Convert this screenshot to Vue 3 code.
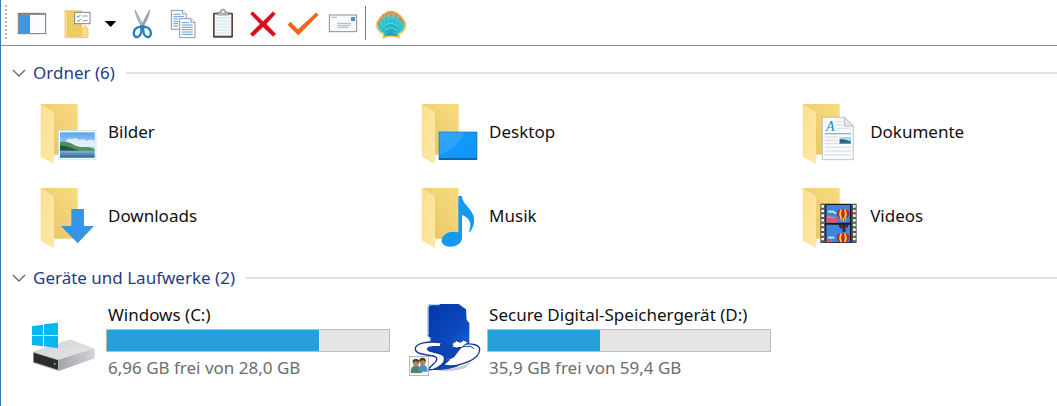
<template>
  <div class="explorer">
    <div class="toolbar" role="toolbar" aria-label="Symbolleiste">
      <span class="grip"></span>
      <button class="tool" type="button" aria-label="Navigationsbereich">
        <svg viewBox="36 0 120 135">
          <rect x="55" y="40" width="82" height="61" fill="#fbfbfd" stroke="#6f7780" stroke-width="3" />
          <rect x="57" y="45" width="33" height="54" fill="#3b97e3" />
          <path d="M54 42h84" stroke="#6f7780" stroke-width="5" />
          <path d="M119 42h3m4 0h3m4 0h3" stroke="#fff" stroke-width="2" />
        </svg>
      </button>
      <button class="tool options" type="button" aria-label="Ordneroptionen">
        <svg viewBox="174 0 120 135">
          <path d="M195 31h52v82h-52z" fill="#efcb63" />
          <path d="M195 31l8 6v71h45v-22l8-10 8 10v27h-69z" fill="#fbdf88" stroke="#e3bd58" stroke-width="2" />
          <rect x="224" y="37" width="46" height="34" fill="#fff" stroke="#7c8792" stroke-width="3" />
          <path d="M231 48l4 4 7-8M231 61l4 4 7-8" fill="none" stroke="#2e8ae0" stroke-width="3" />
          <path d="M247 48h16M247 62h16" stroke="#8c98a5" stroke-width="3" />
        </svg>
      </button>
      <button class="tool drop" type="button" aria-label="Weitere Optionen">
        <svg viewBox="294 0 72 135">
          <path d="M314 63h35l-17 18z" fill="#000" />
        </svg>
      </button>
      <button class="tool" type="button" aria-label="Ausschneiden">
        <svg viewBox="369 0 120 135">
          <path d="M405 30l28 51-6 4c-9-17-20-35-22-55z" fill="#b9bcc1" stroke="#8f9399" stroke-width="2" />
          <path d="M449 30l-28 51 6 4c9-17 20-35 22-55z" fill="#a2a5ab" stroke="#85898f" stroke-width="2" />
          <g fill="none" stroke="#2382bd" stroke-width="7">
            <path d="M427 78c-5 4-14 1-20 8-8 8-7 20-1 24 7 4 17-4 18-15 0-6-1-11 3-17z" />
            <path d="M427 78c5 4 14 1 20 8 8 8 7 20 1 24-7 4-17-4-18-15 0-6 1-11-3-17z" />
          </g>
        </svg>
      </button>
      <button class="tool" type="button" aria-label="Kopieren">
        <svg viewBox="489 0 120 135">
          <g fill="#fff" stroke="#7b828a" stroke-width="2.5">
            <path d="M514 31h34l11 11v46h-45z" />
            <path d="M548 31v11h11" />
          </g>
          <path d="M520 43h22M520 50h32M520 57h14M520 64h14M520 71h14M520 78h14" stroke="#5f9ce6" stroke-width="3" />
          <g fill="#fff" stroke="#7b828a" stroke-width="2.5">
            <path d="M539 56h34l12 11v46h-46z" />
            <path d="M573 56v11h12" />
          </g>
          <path d="M545 68h22M545 75h33M545 82h33M545 89h33M545 96h33M545 103h33" stroke="#5f9ce6" stroke-width="3" />
        </svg>
      </button>
      <button class="tool" type="button" aria-label="Einfügen">
        <svg viewBox="9 0 120 135">
          <rect x="39" y="38" width="60" height="75" rx="3" fill="#5c4437" />
          <rect x="44" y="43" width="50" height="64" fill="#f7fafe" />
          <path d="M46 54h46M46 63h46M46 72h46M46 81h46M46 90h46M46 99h46" stroke="#b9d3ec" stroke-width="2" />
          <path d="M52 45v-8h9c0-13 16-13 16 0h9v8z" fill="#b5b9be" stroke="#777c82" stroke-width="2" />
          <circle cx="69" cy="35" r="3" fill="#fff" />
        </svg>
      </button>
      <button class="tool" type="button" aria-label="Löschen">
        <svg viewBox="129 0 120 135">
          <path d="M158 35l31 30 30-30 7 7-28 30 29 30-8 7-30-29-30 29-8-7 30-30-29-30z" fill="#d90d1c" stroke="#c80a18" stroke-width="2" />
        </svg>
      </button>
      <button class="tool" type="button" aria-label="Eigenschaften">
        <svg viewBox="249 0 120 135">
          <path d="M264 74l8-7 22 22 54-50 6 6-59 60z" fill="#f2651a" stroke="#d9540b" stroke-width="2" />
        </svg>
      </button>
      <button class="tool" type="button" aria-label="Senden">
        <svg viewBox="369 0 120 135">
          <rect x="388" y="45" width="82" height="50" fill="#f8f9fa" stroke="#8b9095" stroke-width="3" />
          <rect x="453" y="51" width="12" height="12" fill="#4a8fd0" />
          <path d="M394 52h17M412 70h41M412 76h41M412 82h33" stroke="#8b9095" stroke-width="2" />
        </svg>
      </button>
      <span class="divider"></span>
      <button class="tool shell" type="button" aria-label="Classic Shell">
        <svg viewBox="513 0 120 135">
          <path d="M549 113v-12c-14-5-22-17-19-31 1-8 5-10 9-16 3-7 9-8 14-13 6-5 11-7 19-7s15 2 20 7c6 4 11 6 14 13 4 6 8 8 9 16 2 14-5 26-19 31v12c-8-3-15-4-24-4s-16 1-23 4z" transform="translate(1 0)" fill="url(#shellFill)" stroke="#f3c85c" stroke-width="5" />
          <path d="M572 105L535 72M572 105L543 54M572 105L556 42M572 105V37M572 105l17-63M572 105l30-51M572 105l38-33" stroke="#1fa0b4" stroke-width="1.5" />
          <path d="M534 73q-2-8 7-10-2-9 7-11 0-9 10-9 5-8 14-5 9-4 15 5 9 0 11 9 8 2 6 11 8 3 7 10" fill="none" stroke="#e97d4c" stroke-width="5" stroke-dasharray="7 3" />
          <path d="M547 82q25-25 50 0M554 91q18-15 37 0" fill="none" stroke="#63ddec" stroke-width="3" />
          <path d="M556 106q16-5 33 0" fill="none" stroke="#2796aa" stroke-width="4" />
        </svg>
      </button>
    </div>

    <main class="content">
      <section class="group">
        <h2 class="group-head">
          <button type="button" :aria-expanded="foldersOpen" @click="foldersOpen = !foldersOpen">
            <svg class="chevron" viewBox="0 0 14 8"><path d="M1 1l6 6 6-6" /></svg>
            Ordner ({{ folders.length }})
          </button>
        </h2>
        <div v-if="foldersOpen" class="tiles">
          <a v-for="f in folders" :key="f.id" class="tile" href="#">
            <svg class="icon" viewBox="0 0 228 252" aria-hidden="true">
              <path d="M26 42h111v152H62z" fill="url(#folderBack)" />
              <path d="M64 194h7v8l-7 13z" fill="#f3f3f3" />
              <path d="M26 42l35 21q5 3 5 9v150L26 200z" fill="url(#folderFront)" />
              <g v-if="f.id === 'bilder'" transform="translate(-96 -120)">
                <rect x="176" y="242" width="112" height="86" fill="#f7fbfe" stroke="#c8dcea" stroke-width="2" />
                <rect x="180" y="247" width="104" height="76" fill="url(#sky)" />
                <path d="M198 272q8-11 18-4 12-9 22 2 15-6 22 3 12-8 24-1v18h-86z" fill="#fff" opacity=".7" />
                <path d="M180 275q18-2 33 5 12 9 31 12 23-4 40 6v6H180z" fill="#4f8f58" />
                <path d="M180 286q27 3 44 12l20 6h-64z" fill="#24573d" />
                <path d="M180 302h104v21H180z" fill="url(#lake)" />
              </g>
              <g v-else-if="f.id === 'desktop'" transform="translate(-39 0)">
                <rect x="117" y="126" width="114" height="82" fill="url(#screen)" stroke="#176fae" stroke-width="2" />
                <path d="M118 127h78q-24 48-78 68z" fill="#fff" opacity=".1" />
                <path d="M117 207h114" stroke="#115384" stroke-width="4" />
              </g>
              <g v-else-if="f.id === 'dokumente'" transform="translate(-40 0)">
                <path d="M125 82h66l27 26v101h-93z" fill="#f8fafb" stroke="#a3aab0" stroke-width="2" />
                <path d="M191 82v26h27z" fill="#e3e8ec" stroke="#a3aab0" stroke-width="2" />
                <path d="M166 95h20M166 105h20M168 115h42M132 141h40M132 151h40M132 161h40M132 172h79M132 183h79M132 195h79" stroke="#c3cbd2" stroke-width="2" />
                <path d="M132 131h79" stroke="#79b9dc" stroke-width="4" />
                <text x="136" y="124" class="doc-letter">A</text>
                <rect x="177" y="141" width="34" height="21" fill="#a5d5f3" />
                <path d="M177 147q17 0 34 8v7h-34z" fill="#285e78" />
                <path d="M177 158h34v4h-34z" fill="#4d9bd0" />
              </g>
              <g v-else-if="f.id === 'downloads'" transform="translate(-36 3)">
                <path d="M154 102h38v51h30l-49 52-50-52h31z" fill="#3595e8" />
              </g>
              <g v-else-if="f.id === 'musik'" transform="translate(-39 3)">
                <path d="M175 64q6-4 11 0c1 17 14 27 25 41 17 23 14 46-1 66l-3-2c10-24 3-39-21-49v68c0 16-16 27-35 27-17 0-27-8-26-20 2-19 29-30 50-23z" fill="#109bee" />
              </g>
              <g v-else transform="translate(-40 3)">
                <rect x="119" y="86" width="109" height="118" fill="#54575a" />
                <path d="M126 90v112M221 90v112" stroke="#f2f2f2" stroke-width="8" stroke-dasharray="8 6" />
                <path d="M134 87h78v117h-78z" fill="#17181b" />
                <path d="M137 90h71v53h-71zM137 149h71v53h-71z" fill="#4083dc" />
                <path d="M137 143v-12l10-5 11 6 8-6 5 4v13z" fill="#e0507c" />
                <path d="M139 128l8-4 7 5 9-4" fill="none" stroke="#f08a6a" stroke-width="4" />
                <path d="M142 112q6-7 9-1 6-5 9 2 5-1 7 4M142 190q6-7 9-1 6-5 9 2" fill="none" stroke="#c4dcf8" stroke-width="5" />
                <path d="M137 202v-5l12-3 10 8z" fill="#e0507c" />
                <g v-for="b in balloons" :key="b" :transform="`translate(0 ${b})`">
                  <path d="M187 101c-13 0-19 7-19 15 0 6 5 10 9 14h20c5-4 9-8 9-14 0-8-7-15-19-15z" fill="#c2262d" />
                  <path d="M180 103q-8 13-1 27h5q-5-15 0-29zM194 103q8 13 1 27h-5q5-15 0-29z" fill="#f3d33c" />
                </g>
                <path d="M178 130h19l-4 11h-11z" fill="#e3c54a" />
                <path d="M183 131l2 10M192 131l-2 10" stroke="#352d36" stroke-width="2" />
                <path d="M174 146h30q-1 10-9 15h-13q-8-5-8-15z" fill="#202539" />
                <path d="M182 150q1 6 4 10M197 150q-1 6-4 10" fill="none" stroke="#c23b43" stroke-width="3" />
                <path d="M186 163h8v7h-8z" fill="#121827" />
              </g>
            </svg>
            <span class="label">{{ f.name }}</span>
          </a>
        </div>
      </section>

      <section class="group">
        <h2 class="group-head">
          <button type="button" :aria-expanded="drivesOpen" @click="drivesOpen = !drivesOpen">
            <svg class="chevron" viewBox="0 0 14 8"><path d="M1 1l6 6 6-6" /></svg>
            Geräte und Laufwerke ({{ drives.length }})
          </button>
        </h2>
        <div v-if="drivesOpen" class="tiles">
          <a v-for="d in drives" :key="d.id" class="tile" href="#">
            <svg v-if="d.id === 'c'" class="icon" viewBox="96 24 228 252" aria-hidden="true">
              <path d="M99 186l111-37 73 27v29l-107 38-77-25z" fill="#bfc1c4" />
              <path d="M99 185l105-34q6-2 12 0l67 25-107 33z" fill="url(#diskTop)" />
              <path d="M176 209l107-33v29l-107 38z" fill="url(#diskSide)" />
              <path d="M99 185l77 24v34l-77-25z" fill="#b2b4b6" />
              <path d="M101 188l73 23v28l-73-23z" fill="#2b2d2f" />
              <circle cx="164" cy="222" r="3" fill="#51d66b" />
              <path d="M96 109l33-5v31H96zM132 103l42-5v37h-42zM96 138h33v31l-33-4zM132 138h42v37l-42-6z" fill="#08b7ef" />
            </svg>
            <svg v-else class="icon" viewBox="27 0 228 252" aria-hidden="true">
              <path d="M100 214q60 4 104-26l-20 22q-32 12-84 8z" fill="#c9ccd2" />
              <path d="M78 140l-1-22-6-4V26q1-8 9-8h84l22 16 2 32 8 9v60l-42 34h-40z" fill="url(#sdFill)" />
              <path d="M72 112V30q0-9 9-10h26M78 118v22" fill="none" stroke="#b8d8ff" stroke-width="4" />
              <!-- rechte Schleife -->
              <path d="M178 139c26-4 50 2 49 16-1 28-52 50-112 51l12-15c4-8 14-10 22-15 6-8 14-22 29-37z" fill="#fff" stroke="#16389a" stroke-width="4" stroke-linejoin="round" />
              <path d="M168 148c18-5 39-4 41 5" fill="none" stroke="#16389a" stroke-width="3" />
              <!-- Mittelteil und Fuß -->
              <path d="M72 150q30-14 96-8l12-2-30 34q-8 10-26 9l-14 9q-8-18-38-24z" fill="#0a45b4" />
              <path d="M124 182l14 4-18 14q30 3 49 2-28 15-84 14l20-16z" fill="#0a45b4" />
              <path d="M112 134c-38-5-80 0-78 20 2 16 34 16 54 20 16 4 12 16-2 26l-16 16 18-2c20-6 34-20 34-32 0-16-26-17-45-23-12-4-6-13 12-13h20z" fill="#fff" stroke="#16389a" stroke-width="4" stroke-linejoin="round" />
              <path d="M143 138l14-10 12 5 10-7 14 7-20 15q-14 4-35-1l10-4z" fill="#fff" stroke="#16389a" stroke-width="3" />
              <rect x="16" y="175" width="58" height="58" fill="#f7f8f7" stroke="#999" stroke-width="2" />
              <path d="M21 225q-3-22 15-22t18 22z" fill="#46886b" />
              <path d="M45 221q-3-21 11-21 15 0 15 21z" fill="#4b91c7" />
              <ellipse cx="36" cy="195" rx="9" ry="11" fill="#b58563" />
              <path d="M26 196q-2-14 11-13 10 0 9 11l-10-5-7 4z" fill="#463e35" />
              <ellipse cx="56" cy="191" rx="9" ry="11" fill="#b9825c" />
              <path d="M46 191q-1-13 11-12 10 1 8 13l-7-6z" fill="#493b31" />
            </svg>
            <span class="drive">
              <label class="label" :for="'usage-' + d.id">{{ d.name }}</label>
              <progress :id="'usage-' + d.id" class="usage" :max="d.total" :value="d.total - d.free"></progress>
              <span class="label free">{{ formatGB(d.free) }} frei von {{ formatGB(d.total) }}</span>
            </span>
          </a>
        </div>
      </section>
    </main>

    <!-- gemeinsame Farbverläufe -->
    <svg class="defs" aria-hidden="true">
      <defs>
        <linearGradient id="folderBack" x1="0" y1="1" x2="1" y2="0">
          <stop offset="0" stop-color="#e6c362" />
          <stop offset="1" stop-color="#f9dc80" />
        </linearGradient>
        <linearGradient id="folderFront" x1="0" y1="0" x2="1" y2="1">
          <stop offset="0" stop-color="#fbdf90" />
          <stop offset="1" stop-color="#ffe8a6" />
        </linearGradient>
        <linearGradient id="sky" x1="0" y1="0" x2="0" y2="1">
          <stop offset="0" stop-color="#5ba5ed" />
          <stop offset="1" stop-color="#e5f5ff" />
        </linearGradient>
        <linearGradient id="lake" x1="0" y1="0" x2="0" y2="1">
          <stop offset="0" stop-color="#86b8d8" />
          <stop offset="1" stop-color="#296596" />
        </linearGradient>
        <linearGradient id="screen" x1="0" y1="0" x2="1" y2="1">
          <stop offset="0" stop-color="#189cfb" />
          <stop offset="1" stop-color="#0b94f7" />
        </linearGradient>
        <linearGradient id="diskTop" x1="0" y1="0" x2="1" y2="1">
          <stop offset="0" stop-color="#d1d2d4" />
          <stop offset="1" stop-color="#e7e7e9" />
        </linearGradient>
        <linearGradient id="diskSide" x1="0" y1="0" x2="1" y2="0">
          <stop offset="0" stop-color="#a4a5a8" />
          <stop offset="1" stop-color="#d2d3d6" />
        </linearGradient>
        <linearGradient id="sdFill" x1="0" y1="0" x2="1" y2="1">
          <stop offset="0" stop-color="#0436a4" />
          <stop offset=".6" stop-color="#0a49be" />
          <stop offset="1" stop-color="#1268dd" />
        </linearGradient>
        <radialGradient id="shellFill" cx=".5" cy=".7" r=".65">
          <stop offset="0" stop-color="#20a9c4" />
          <stop offset=".65" stop-color="#38cbd7" />
          <stop offset="1" stop-color="#e5a369" />
        </radialGradient>
      </defs>
    </svg>
  </div>
</template>

<script setup>
import { ref } from 'vue'

const foldersOpen = ref(true)
const drivesOpen = ref(true)

const folders = [
  { id: 'bilder', name: 'Bilder' },
  { id: 'desktop', name: 'Desktop' },
  { id: 'dokumente', name: 'Dokumente' },
  { id: 'downloads', name: 'Downloads' },
  { id: 'musik', name: 'Musik' },
  { id: 'videos', name: 'Videos' }
]

const drives = [
  { id: 'c', name: 'Windows (C:)', free: 6.96, total: 28 },
  { id: 'd', name: 'Secure Digital-Speichergerät (D:)', free: 35.9, total: 59.4 }
]

// vertikale Lage der Ballons im Filmstreifen
const balloons = [0, 72]

// drei signifikante Stellen, deutsches Komma
const formatGB = (value) => value.toPrecision(3).replace('.', ',') + ' GB'
</script>

<style>
body {
  margin: 0;
  background: #fff;
}
</style>

<style scoped>
.explorer {
  box-sizing: border-box;
  min-height: 100vh;
  border-left: 1px solid #2f7dbb;
  font-family: "Segoe UI", "Noto Sans", sans-serif;
  font-size: 17px;
  line-height: 24px;
  color: #111;
}

button {
  padding: 0;
  border: 0;
  background: none;
  font: inherit;
  color: inherit;
}

.toolbar {
  display: flex;
  align-items: center;
  height: 45px;
  padding-left: 4px;
  border-bottom: 1px solid #8e8e8e;
}

.grip {
  width: 2px;
  height: 36px;
  margin-right: 5px;
  background: repeating-linear-gradient(#b5b5b5 0 2px, #fff 2px 4px);
}

.tool {
  width: 40px;
  height: 45px;
}

.tool svg {
  display: block;
  width: 100%;
  height: 100%;
}

.options {
  margin-left: 6px;
}

.drop {
  width: 24px;
  margin-right: 1px;
}

.divider {
  width: 1px;
  height: 34px;
  margin: 0 5px 0 2px;
  background: #777;
}

.content {
  padding-top: 7px;
}

.group {
  padding-top: 3px;
}

.group-head {
  display: flex;
  align-items: center;
  gap: 11px;
  height: 34px;
  margin: 0;
  padding-left: 11px;
  font-size: inherit;
  font-weight: normal;
  color: #263a86;
}

.group-head::after {
  content: "";
  flex: 1;
  height: 2px;
  background: #e2e2e2;
}

.group-head button {
  display: flex;
  align-items: center;
  gap: 7px;
}

.chevron {
  width: 14px;
  height: 8px;
  fill: none;
  stroke: #666;
  stroke-width: 1.3;
}

.tiles {
  display: grid;
  grid-template-columns: 29fr 29fr 20fr;
  padding-left: 31px;
}

.tile {
  display: flex;
  align-items: center;
  min-width: 0;
  height: 84px;
  color: inherit;
  text-decoration: none;
}

.group + .group .tiles {
  padding-top: 3px;
}

.icon {
  flex: none;
  width: 76px;
  height: 84px;
  margin-right: -2px;
  overflow: visible;
}

.label {
  padding-left: 2px;
  white-space: nowrap;
}

.drive {
  display: flex;
  flex: 1;
  flex-direction: column;
  min-width: 0;
  margin-right: 23px;
  padding-top: 2px;
}

.usage {
  box-sizing: border-box;
  width: 100%;
  height: 23px;
  margin: 2px 0 4px;
  appearance: none;
  border: 1px solid #bcbcbc;
  background: #e6e6e6;
}

.usage::-webkit-progress-bar {
  background: #e6e6e6;
}

.usage::-webkit-progress-value {
  background: #26a0da;
}

.free {
  color: #6d6d6d;
}

.doc-letter {
  font-family: "Liberation Serif", serif;
  font-size: 42px;
  font-style: italic;
  fill: #1c83c6;
}

.defs {
  position: absolute;
  width: 0;
  height: 0;
}
</style>
